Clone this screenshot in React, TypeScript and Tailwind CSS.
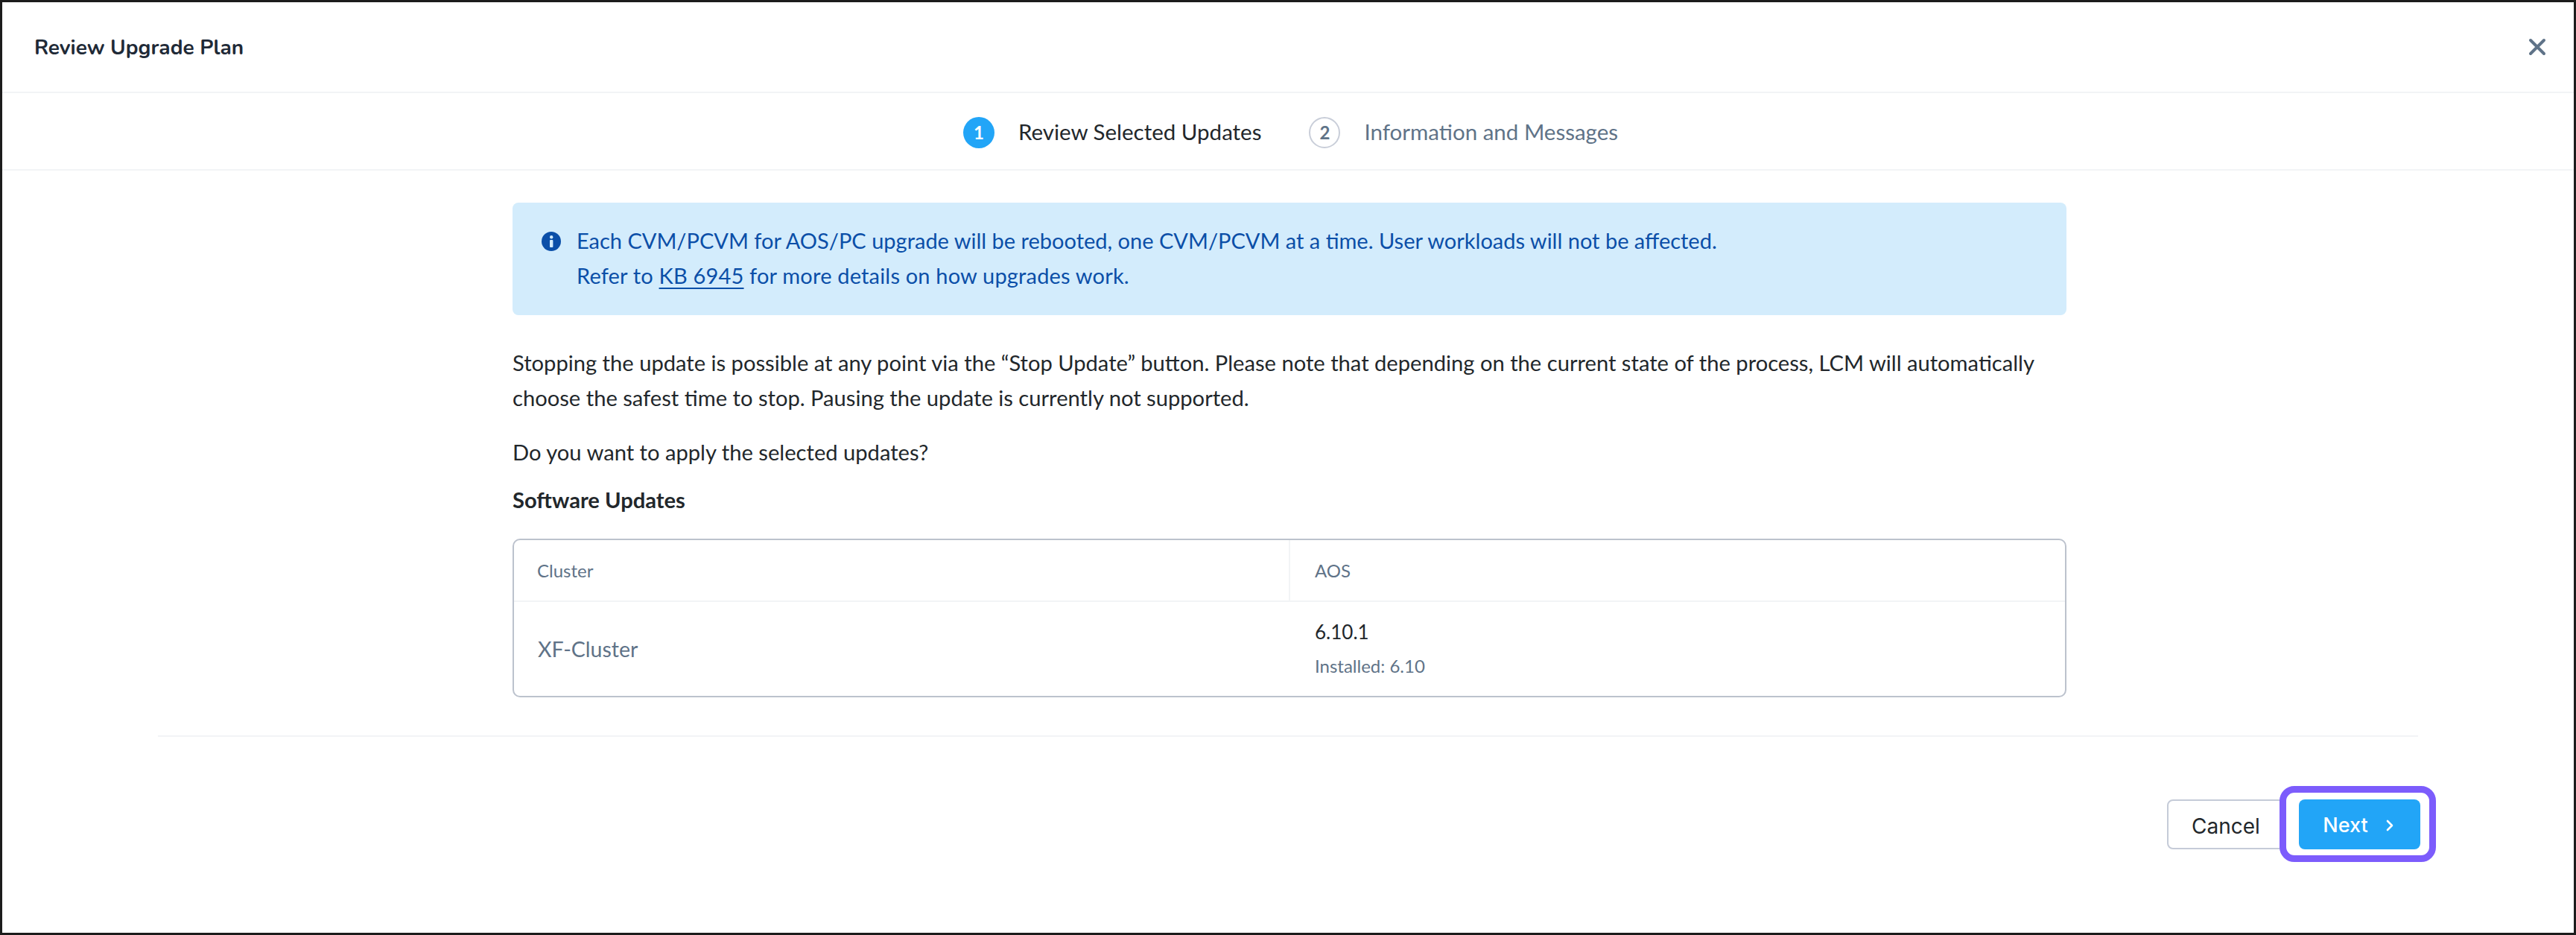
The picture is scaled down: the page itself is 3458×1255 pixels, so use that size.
import React from "react";

export default function App() {
  return (
    <div className="w-[3458px] h-[1255px] border-[3px] border-[#1c1c1c] bg-white font-['Lato','Open_Sans',sans-serif] text-[#22272b] flex flex-col overflow-hidden">
      <header className="h-[122px] shrink-0 flex items-center justify-between pl-[43px] pr-[37px] border-b-2 border-[#f2f4f6]">
        <h1 className="font-['Nunito','Lato',sans-serif] text-[28px] font-bold text-[#1f2a37] mt-[1px]">Review Upgrade Plan</h1>
        <svg width="24" height="24" viewBox="0 0 24 24" fill="none" stroke="#5f7388" strokeWidth="4" strokeLinecap="round">
          <path d="M3 3 L21 21 M21 3 L3 21" />
        </svg>
      </header>

      <nav className="h-[104px] shrink-0 flex items-center justify-center border-b-2 border-[#f2f4f6] text-[29.5px] pl-[7px]">
        <div className="flex items-center pt-[3px]">
          <span className="w-[42px] h-[42px] rounded-full bg-[#22a5f7] text-white flex items-center justify-center text-[24px] font-bold">1</span>
          <span className="ml-[32px] text-[#22272b]">Review Selected Updates</span>
        </div>
        <div className="flex items-center ml-[64px] pt-[3px]">
          <span className="w-[42px] h-[42px] rounded-full border-2 border-[#c9ced9] text-[#5f7388] flex items-center justify-center text-[24px] font-bold">2</span>
          <span className="ml-[32px] text-[#5f7388]">Information and Messages</span>
        </div>
      </nav>

      <main className="flex-1 flex flex-col items-center min-h-0">
        <div className="w-[2086px] mt-[43px] ml-[4px]">
          <div className="h-[151px] rounded-[8px] bg-[#d3ecfc] text-[#0b4fa8] text-[29px] flex pl-[39px] pt-[27px]">
            <svg width="26" height="26" viewBox="0 0 26 26" className="mt-[12px] shrink-0">
              <circle cx="13" cy="13" r="13" fill="#0b4fa8" />
              <rect x="11" y="5" width="4.4" height="4.4" rx="2.2" fill="#d3ecfc" />
              <rect x="11" y="11" width="4.4" height="10" rx="1" fill="#d3ecfc" />
            </svg>
            <div className="ml-[21px] leading-[47px]">
              <p>Each CVM/PCVM for AOS/PC upgrade will be rebooted, one CVM/PCVM at a time. User workloads will not be affected.</p>
              <p className="tracking-[0.18px]">
                Refer to <a className="underline underline-offset-[5px] decoration-2">KB 6945</a> for more details on how upgrades work.
              </p>
            </div>
          </div>

          <p className="mt-[40px] text-[29.15px] leading-[47px]">
            Stopping the update is possible at any point via the “Stop Update” button. Please note that depending on the current state of the process, LCM will automatically
            <br />
            choose the safest time to stop. Pausing the update is currently not supported.
          </p>
          <p className="mt-[26px] text-[29.15px] leading-[47px]">Do you want to apply the selected updates?</p>
          <p className="mt-[17px] text-[29.15px] leading-[47px] font-bold">Software Updates</p>

          <div className="mt-[29px] h-[213px] rounded-[10px] border-2 border-[#bcc2cd] flex flex-col overflow-hidden">
            <div className="h-[83px] shrink-0 flex border-b-2 border-[#f2f4f6] text-[24px] text-[#5f7388]">
              <div className="w-[1042px] shrink-0 pl-[31px] flex items-center border-r-2 border-[#f2f4f6]">Cluster</div>
              <div className="pl-[33px] flex items-center">AOS</div>
            </div>
            <div className="flex-1 flex">
              <div className="w-[1042px] shrink-0 pl-[32px] flex items-center text-[28.5px] text-[#5f7388]">XF-Cluster</div>
              <div className="pl-[33px] flex flex-col justify-center">
                <span className="text-[26px] leading-[40px] -mt-[3px] text-[#22272b]">6.10.1</span>
                <span className="text-[24px] leading-[36px] mt-[8px] text-[#5f7388]">Installed: 6.10</span>
              </div>
            </div>
          </div>
        </div>

        <div className="w-[3034px] mt-[51px] border-t-2 border-[#f2f4f6]" />

        <div className="w-full flex justify-end mt-[84px] pr-[206px]">
          <button className="w-[158px] h-[67px] rounded-[8px] border-2 border-[#c5cbd8] font-['Inter',sans-serif] text-[28px] pt-[4px] text-[#22272b]">Cancel</button>
          <div className="relative ml-[19px]">
            <div className="absolute -left-[26px] -right-[21px] -top-[18px] -bottom-[17px] rounded-[20px] border-[9px] border-[#7c5cfc] bg-white" />
            <button className="relative w-[163px] h-[67px] rounded-[8px] bg-[#22a5f7] text-white font-['Inter',sans-serif] text-[27px] font-medium flex items-center justify-center pt-[4px]">
              Next
              <svg width="12" height="18" viewBox="0 0 12 18" fill="none" stroke="white" strokeWidth="2.6" strokeLinecap="round" strokeLinejoin="round" className="ml-[23px] mr-[3px] -mt-[2px]">
                <path d="M3 3 L9 9 L3 15" />
              </svg>
            </button>
          </div>
        </div>
      </main>
    </div>
  );
}
